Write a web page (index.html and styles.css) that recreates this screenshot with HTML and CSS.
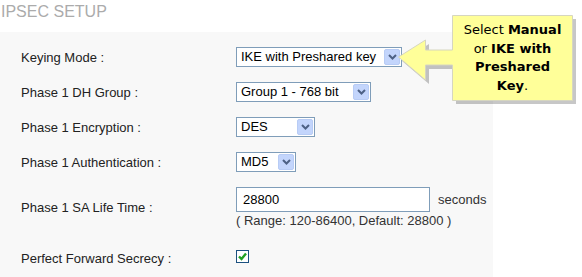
FILE: index.html
```html
<!DOCTYPE html>
<html lang="en">
<head>
  <meta charset="UTF-8" />
  <title>IPSEC Setup</title>
  <link rel="stylesheet" href="styles.css">
</head>
<body>
  <h1 class="title">IPSEC SETUP</h1>

  <div class="panel">
    <div class="form">
      <label class="lbl">Keying Mode :</label>
      <div class="field">
        <div class="sel sel-keying"><span>IKE with Preshared key</span><i class="btn"><svg width="9" height="6" viewBox="0 0 9 6"><path d="M1 1 L4.5 4.5 L8 1" fill="none" stroke="#4d6185" stroke-width="2"/></svg></i></div>
      </div>

      <label class="lbl">Phase 1 DH Group :</label>
      <div class="field">
        <div class="sel sel-group"><span>Group 1 - 768 bit</span><i class="btn"><svg width="9" height="6" viewBox="0 0 9 6"><path d="M1 1 L4.5 4.5 L8 1" fill="none" stroke="#4d6185" stroke-width="2"/></svg></i></div>
      </div>

      <label class="lbl">Phase 1 Encryption :</label>
      <div class="field">
        <div class="sel sel-des"><span>DES</span><i class="btn"><svg width="9" height="6" viewBox="0 0 9 6"><path d="M1 1 L4.5 4.5 L8 1" fill="none" stroke="#4d6185" stroke-width="2"/></svg></i></div>
      </div>

      <label class="lbl">Phase 1 Authentication :</label>
      <div class="field">
        <div class="sel sel-md5"><span>MD5</span><i class="btn"><svg width="9" height="6" viewBox="0 0 9 6"><path d="M1 1 L4.5 4.5 L8 1" fill="none" stroke="#4d6185" stroke-width="2"/></svg></i></div>
      </div>

      <label class="lbl">Phase 1 SA Life Time :</label>
      <div class="field">
        <div class="life">
          <div class="txt">28800</div>
          <span class="unit">seconds</span>
        </div>
        <div class="hint">( Range: 120-86400, Default: 28800 )</div>
      </div>

      <label class="lbl lbl-last">Perfect Forward Secrecy :</label>
      <div class="field field-last">
        <span class="chk"><svg width="11" height="11" viewBox="0 0 11 11"><path d="M2 5.5 L4.5 8 L9 2.5" fill="none" stroke="#21a121" stroke-width="2.4"/></svg></span>
      </div>
    </div>
  </div>

  <div class="callout">
    <svg class="shape" width="182" height="92" viewBox="0 0 182 92">
      <path d="M0 42 L27 25 L27 35 L54 35 L54 0 L174 0 L174 85 L54 85 L54 50 L27 50 L27 65 Z" fill="#000" opacity="0.22" transform="translate(4 4)"/>
      <path d="M0.5 42 L27.5 25 L27.5 35 L54.5 35 L54.5 0.5 L174.5 0.5 L174.5 85.5 L54.5 85.5 L54.5 50 L27.5 50 L27.5 65 Z" fill="#ffff99" stroke="#d6d6c0"/>
    </svg>
    <div class="tip">Select <b>Manual</b><br>or <b>IKE with</b><br><b>Preshared</b><br><b>Key</b>.</div>
  </div>
</body>
</html>
```

FILE: styles.css
```css
body { margin: 0; background: #fff; font-family: Arial, "Liberation Sans", sans-serif; font-size: 13px; color: #222; position: relative; width: 582px; height: 277px; overflow: hidden; }
.title { margin: 0; padding: 3px 0 0 1px; height: 32px; box-sizing: border-box; font-size: 16px; font-weight: normal; color: #ababab; line-height: 18px; }
.panel { background: #f8f8f8; width: 493px; height: 245px; }
.form { display: grid; grid-template-columns: 215px 1fr; grid-template-rows: 20px 20px 20px 20px 41px 30px; row-gap: 15px; padding: 15px 0 0 21px; align-items: center; }
.lbl { line-height: 15px; }
.field { height: 100%; }
.sel { display: flex; align-items: center; justify-content: space-between; height: 20px; box-sizing: border-box; border: 1px solid #7f9db9; background: #fff; padding: 0 1px 0 4px; color: #000; }
.sel span { line-height: 16px; }
.btn { display: flex; align-items: center; justify-content: center; width: 16px; height: 16px; box-sizing: border-box; background: #c3d5fc; border: 1px solid #b8ccf5; border-radius: 2px; }
.sel-keying { width: 166px; }
.sel-group { width: 135px; }
.sel-des { width: 79px; }
.sel-md5 { width: 60px; }
.life { display: flex; align-items: center; }
.txt { width: 194px; height: 25px; box-sizing: border-box; border: 1px solid #7f9db9; background: #fff; padding: 0 6px; line-height: 23px; color: #000; }
.unit { margin-left: 8px; color: #333; }
.hint { margin-top: 1px; line-height: 15px; color: #333; }
.lbl-last { align-self: start; margin-top: 8px; }
.chk { display: flex; align-items: center; justify-content: center; width: 13px; height: 13px; box-sizing: border-box; border: 1px solid #1c5180; background: #fff; margin-top: 7px; }
.callout { position: absolute; left: 398px; top: 15px; width: 182px; height: 92px; }
.shape { display: block; }
.tip { position: absolute; left: 54px; top: 6px; width: 121px; text-align: center; font-family: "DejaVu Sans", Verdana, sans-serif; font-size: 13px; line-height: 18.5px; color: #000; }
```
